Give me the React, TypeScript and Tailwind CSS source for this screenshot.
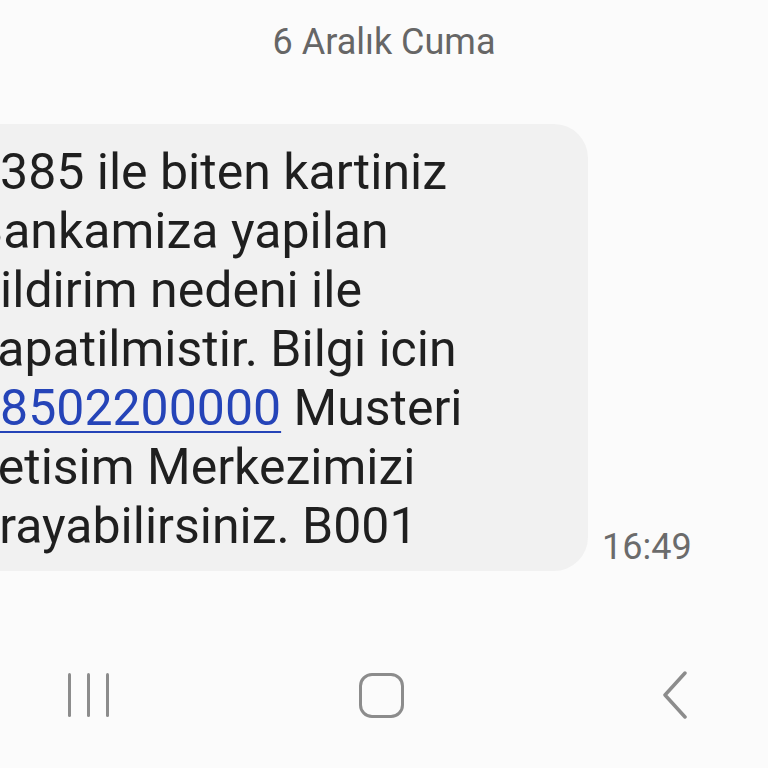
const lines = [
    "0385 ile biten kartiniz",
    "Bankamiza yapilan",
    "bildirim nedeni ile",
    "kapatilmistir. Bilgi icin",
];

const App = () => {
    return (
        <div
            className="w-[768px] h-[768px] overflow-hidden bg-[#fbfbfb] flex flex-col"
            style={{ fontFamily: "Roboto, 'Noto Sans', sans-serif" }}
        >
            <p className="text-center text-[36px] leading-none text-[#666666] pt-[24px]">
                6 Aralık Cuma
            </p>

            <div className="flex items-end gap-[14px] mt-[64px]">
                <div className="ml-[-52px] w-[640px] shrink-0 rounded-[34px] bg-[#f1f1f1] pl-6 pt-[19px] pb-[15px] text-[50px] leading-[59px] text-[#1f1f1f]">
                    {lines.map((l) => (
                        <div key={l}>{l}</div>
                    ))}
                    <div>
                        <span className="text-[#2544b8] underline decoration-[2px] underline-offset-[6px]">
                            08502200000
                        </span>{" "}
                        Musteri
                    </div>
                    <div>Iletisim Merkezimizi</div>
                    <div>arayabilirsiniz. B001</div>
                </div>
                <span className="text-[36px] leading-none text-[#6b6b6b] pb-[6px]">16:49</span>
            </div>

            <div className="flex-1" />

            <div className="flex items-center h-[46px] mb-[50px] pl-[68px]">
                <div className="flex gap-[16px]">
                    <div className="w-[3px] h-[44px] rounded-full bg-[#8c8c8c]" />
                    <div className="w-[3px] h-[44px] rounded-full bg-[#8c8c8c]" />
                    <div className="w-[3px] h-[44px] rounded-full bg-[#8c8c8c]" />
                </div>
                <div className="w-[45px] h-[45px] rounded-[13px] border-[3.5px] border-[#8c8c8c] ml-[250px]" />
                <svg className="ml-[258px]" width="26" height="48" viewBox="0 0 26 48" fill="none">
                    <path
                        d="M23 2 L3 24 L23 46"
                        stroke="#8c8c8c"
                        strokeWidth="3.5"
                        strokeLinecap="round"
                        strokeLinejoin="round"
                    />
                </svg>
            </div>
        </div>
    );
};

export default App;
